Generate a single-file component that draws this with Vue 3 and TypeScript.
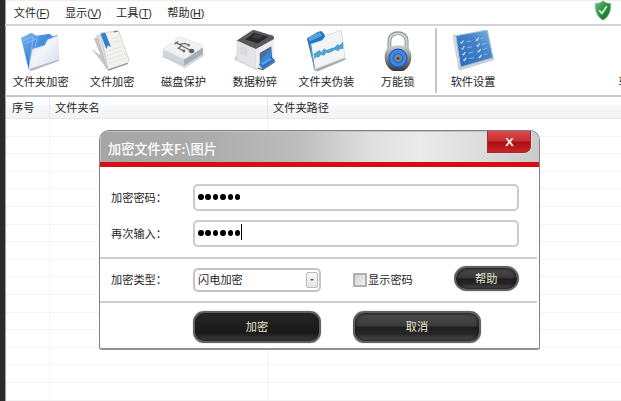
<script setup lang="ts">
import { ref } from 'vue'

interface Menu { label: string; key: string }
interface Tool { icon: string; label: string }

const menus: Menu[] = [
  { label: '文件', key: 'F' },
  { label: '显示', key: 'V' },
  { label: '工具', key: 'T' },
  { label: '帮助', key: 'H' },
]
const tools: Tool[] = [
  { icon: 'folder', label: '文件夹加密' },
  { icon: 'file', label: '文件加密' },
  { icon: 'disk', label: '磁盘保护' },
  { icon: 'shred', label: '数据粉碎' },
  { icon: 'disguise', label: '文件夹伪装' },
  { icon: 'lock', label: '万能锁' },
  { icon: 'settings', label: '软件设置' },
]
const rows = 16
const showPassword = ref(false)
const dots = 6
</script>

<template>
  <div class="app">
    <nav class="menubar">
      <span v-for="m in menus" :key="m.key" class="menu">{{ m.label }}<span class="key">(<u>{{ m.key }}</u>)</span></span>
      <svg class="shield" width="18" height="21" viewBox="0 0 18 21">
        <defs>
          <linearGradient id="sh" x1="0" y1="0" x2="1" y2="1">
            <stop offset="0" stop-color="#6fbf80" /><stop offset=".5" stop-color="#2b8f3f" /><stop offset="1" stop-color="#126c22" />
          </linearGradient>
        </defs>
        <path d="M9 .8C7 2.700 4 3.500 1.200 3.500C1 10 2.500 16.500 9 20.200C15.500 16.500 17 10 16.800 3.500C14 3.500 11 2.700 9 .8Z" fill="url(#sh)" stroke="#8dc297" stroke-width=".8" />
        <path d="M5.200 10.300L8 13.300L12.800 6.200" fill="none" stroke="#d9f0db" stroke-width="1.700" />
      </svg>
    </nav>

    <div class="toolbar">
      <template v-for="t in tools" :key="t.icon">
        <i v-if="t.icon === 'settings'" class="divider"></i>
        <div class="tool">
          <svg v-if="t.icon === 'folder'" width="44" height="44" viewBox="0 0 44 44">
            <defs>
              <linearGradient id="fb" x1="0" y1="0" x2="1" y2="1"><stop offset="0" stop-color="#7db9ef" /><stop offset=".6" stop-color="#2a7bd4" /><stop offset="1" stop-color="#1c6ac7" /></linearGradient>
              <linearGradient id="ff" x1="0" y1="0" x2="1" y2="1"><stop offset="0" stop-color="#d3e2f8" /><stop offset=".45" stop-color="#f3f5fb" /><stop offset="1" stop-color="#d4dae8" /></linearGradient>
            </defs>
            <path d="M9 41L37 31L42 32L12 43Z" fill="#b3b7be" />
            <path d="M1 8L12 3L17 6L31 4L38 10L30 30L9 41Z" fill="url(#fb)" />
            <path d="M3 11L14 7L10 34M6 14L18 9L12 32" fill="none" stroke="#9dcbf5" stroke-width=".7" />
            <path d="M9 41L13 20L26 16L29 10L39 6L41 31Z" fill="url(#ff)" stroke="#c3cfe3" stroke-width=".5" />
            <path d="M13 19L25 15.500L28.500 9.500L39 5.500" fill="none" stroke="#5a9fe2" stroke-width="1" />
          </svg>
          <svg v-else-if="t.icon === 'file'" width="44" height="44" viewBox="0 0 44 44">
            <path d="M0 19L17 41L12 28Z" fill="#c9c9c9" />
            <path d="M3 9L12 6L22 38L16 41Z" fill="#c4c4c4" />
            <path d="M6 6L14 4L24 39L17 41Z" fill="#dedede" stroke="#b5b5b5" stroke-width=".6" />
            <path d="M10 3L29 1L40 32L38 35L18 42Z" fill="#f2f1ef" stroke="#cac8c5" stroke-width=".8" />
            <path d="M15 23L33 17M16 27L34 21M17 31L36 25M18 35L37 29M22 9L29 7M24 13L31 11" stroke="#e2e1df" stroke-width=".8" />
            <path d="M18 42L38.500 35" stroke="#92918f" stroke-width="1.200" />
            <path d="M10 4L15 3L21 18L18 16L16 20Z" fill="#2d80d3" />
            <path d="M24 2L28 1" stroke="#777" stroke-width="1.200" />
          </svg>
          <svg v-else-if="t.icon === 'disk'" width="44" height="44" viewBox="0 0 44 44">
            <path d="M1 28L24 40L44 27L42 23L2 23Z" fill="#d5d8db" />
            <path d="M1 21L23 31L43 18L43 25L24 37L1 28Z" fill="#a3b0ba" />
            <path d="M1 21L23 31L23 36.500L1 27.500Z" fill="#cfd6dc" />
            <path d="M1 20L17 8Q19 7 21 7.500L42 16Q44 17 42 18.500L25 29.500Q23 31 20 29.500Z" fill="#f1f2f3" stroke="#dddfe1" stroke-width=".7" />
            <g fill="none" stroke="#66676a" stroke-width="1.300">
              <path d="M14 13L31 22M18 15L24 14L28 16M20 17L17 19L23 22M13 15L17 12" />
              <ellipse cx="31" cy="22" rx="2.200" ry="1.600" fill="#555" /><circle cx="23" cy="22" r=".8" /><circle cx="28" cy="16" r=".6" />
            </g>
          </svg>
          <svg v-else-if="t.icon === 'shred'" width="44" height="44" viewBox="0 0 44 44">
            <path d="M0 31L23 42L43 31L40 27L3 25Z" fill="#d0d0d0" />
            <path d="M3 11L23 19L23 41L3 31Z" fill="#e2e4e8" stroke="#d3d5da" stroke-width=".6" />
            <path d="M23 19L42 8L42 28L23 41Z" fill="#eeeef1" />
            <path d="M3 11L18 1Q20 -.5 23 .5L41 6Q43 8 41 10L23 20Z" fill="#57595b" />
            <path d="M12 10L21 3L36 7L25 14Z" fill="#252729" /><path d="M18 7L23 4L31 6.500L25 10Z" fill="#3b3d40" />
            <path d="M6 16L14 19L14 28L6 25Z" fill="#d6dade" />
            <path d="M27 24L39 17L40 29L27 36Z" fill="#4d6e93" />
            <path d="M27 33L38 20L40 31L29 38Z" fill="#3984dc" /><path d="M26 36L39 28L43 32L30 41Z" fill="#2a70c2" /><path d="M28 35L37 29L40 31L30 37Z" fill="#5a9fe8" />
            <path d="M25 40L30 41.500L43 33" fill="none" stroke="#3b5876" stroke-width="1.100" />
          </svg>
          <svg v-else-if="t.icon === 'disguise'" width="44" height="44" viewBox="0 0 44 44">
            <path d="M9 42L41 29L43 31L13 43.500Z" fill="#a5abb1" />
            <path d="M2 9L13 2L17 1L20 4L22 10L10 41Z" fill="#2278c0" />
            <path d="M3 8L15 2L18 6L5 12Z" fill="#55a2dd" />
            <path d="M10 41L6 15L18 11L22 6L38 0L42 29Z" fill="#f2f4f7" stroke="#ccd3dc" stroke-width=".8" />
            <path d="M9 25L12 23L15 21L17 23L20 19.500L23 21L27 19L31 18L34 15L36 16L40 12L40 20L37 20L35 22L31 21L28 23L25 24L22 24L20 27L17 26L14 29L12 28L10 31Z" fill="#4fa5cd" />
            <path d="M6 15L10 41" stroke="#4b8dc0" />
          </svg>
          <svg v-else-if="t.icon === 'lock'" width="44" height="44" viewBox="0 0 44 44">
            <defs><linearGradient id="lk" x1="0" x2="0" y1="0" y2="1"><stop offset="0" stop-color="#cfd0d1" /><stop offset=".5" stop-color="#85888b" /><stop offset="1" stop-color="#34373a" /></linearGradient></defs>
            <path d="M13 21V11.500C13 .5 31 .5 31 11.500V21" fill="none" stroke="#8a8d90" stroke-width="4" />
            <path d="M13 20V11.500C13 1 31 1 31 11.500V20" fill="none" stroke="#d1d4d6" stroke-width="2" />
            <path d="M8 28C8 20 13 16 22 16S36 20 36 28C36 35 32 41 27 43H17C12 41 8 35 8 28Z" fill="url(#lk)" />
            <circle cx="22" cy="29.500" r="10" fill="#2458ac" /><circle cx="22" cy="29.500" r="8.800" fill="#3b87ea" />
            <circle cx="22" cy="29.500" r="5.500" fill="#2b68b8" /><circle cx="22" cy="29.500" r="4" fill="#7a858f" /><circle cx="22" cy="29.500" r="1.600" fill="#3b4f63" />
          </svg>
          <svg v-else width="44" height="44" viewBox="0 0 44 44">
            <defs><linearGradient id="st" x1="0" x2="1" y1="1" y2="0"><stop offset="0" stop-color="#2f68b4" /><stop offset=".6" stop-color="#4383c8" /><stop offset="1" stop-color="#86b7e4" /></linearGradient></defs>
            <path d="M6 38L8 42L44 31L43 28Z" fill="#d0d2d4" stroke="#b0b3b6" stroke-width=".6" />
            <path d="M1 6L4 5L9 39L7 40Z" fill="#dcdeda" stroke="#b5b5b5" stroke-width=".5" />
            <path d="M4 6L37 0L43 29L9 39Z" fill="url(#st)" stroke="#a9c5e2" stroke-width="1" />
            <path d="M9 13L10 14L12 11M25 10L26 11L28 8M10 19L11 20L13 17M26 16L27 17L29 14M11 25L12 26L14 23M27 22L28 23L30 20M12 31L13 32L15 29M28 28L29 29L31 26" fill="none" stroke="#c9e1fa" stroke-width="1.200" />
            <path d="M15 12.500L20 11.500M30 9L34 8M16 18.500L21 17.500M31 15L36 14M17 24.500L22 23M32 20.500L37 19M18 30L23 29M33 26L37 25" fill="none" stroke="#86b6e6" stroke-width="1" />
          </svg>
          <span>{{ t.label }}</span>
        </div>
      </template>
      <span class="next-tool">软</span>
    </div>

    <div class="grid head"><b></b><span>序号</span><span>文件夹名</span><span>文件夹路径</span></div>
    <div class="rows">
      <div v-for="r in rows" :key="r" class="grid row"><b></b><span></span><span></span><span></span></div>
    </div>

    <section class="dialog">
      <header>
        <h1>加密文件夹F:\图片</h1>
        <button class="close">
          <svg width="11" height="10" viewBox="0 0 11 10"><path d="M1 .8H3.600L5.500 3.300L7.400.8H10L7 4.900L10.300 9.200H7.500L5.500 6.500L3.500 9.200H.7L4 4.900Z" fill="#f6eeee" stroke="#861212" stroke-width=".4" /></svg>
        </button>
      </header>
      <div class="fields">
        <label>加密密码：</label>
        <div class="input"><i v-for="d in dots" :key="d"></i></div>
        <label>再次输入：</label>
        <div class="input"><i v-for="d in dots" :key="d"></i><em></em></div>
      </div>
      <div class="options">
        <label>加密类型：</label>
        <div class="select">闪电加密<span class="arrow"></span></div>
        <div class="check" @click="showPassword = !showPassword"><i></i>显示密码</div>
        <button class="dark help">帮助</button>
      </div>
      <footer>
        <button class="dark ok">加密</button>
        <button class="dark cancel">取消</button>
      </footer>
    </section>
  </div>
</template>

<style>
body { margin: 0; overflow: hidden; }
</style>

<style scoped>
* { box-sizing: border-box; }
.app {
  position: relative;
  width: 621px;
  height: 401px;
  overflow: hidden;
  border-left: 5px solid #2b2b2b;
  background: #fff;
  box-shadow: inset 1px 0 #9a9fa3;
  font: 11.2px/16px "Liberation Sans", "Noto Sans CJK SC", sans-serif;
  color: #262626;
}
.menubar {
  display: flex;
  height: 24px;
  padding: 4px 0 0 8px;
  border-top: 1px solid #fbeaea;
  margin-left: 1px;
}
.menu { width: 51.500px; margin-left: -.3px; white-space: nowrap; }
.key { font-size: 10.800px; letter-spacing: -.2px; }
.shield { margin: -5px 9px 0 auto; }
.toolbar {
  display: flex;
  height: 73px;
  padding: 4px 0 0 0;
  margin-left: 0;
  border-top: 2px solid #d3d3d5;
  border-bottom: 2px solid #c3c5ca;
  overflow: hidden;
}
.tool {
  flex: none;
  display: flex;
  flex-direction: column;
  align-items: center;
  width: 71.400px;
  white-space: nowrap;
}
.tool svg { display: block; width: 42px; height: 42px; flex: none; }
.tool span { margin-top: 2px; }
.divider { flex: none; width: 2px; height: 65px; margin: -2px 0 0 2px; background: #c5c6c8; }
.next-tool { flex: none; margin: 44px 0 0 110px; white-space: nowrap; }
.grid { display: grid; grid-template-columns: 1px 43px 218px 1fr; }
.grid span { border-right: 1px solid #f3f3f3; padding-left: 5px; }
.grid span:last-child { border-right: 0; }
.head {
  height: 22px;
  line-height: 22px;
  border-bottom: 1px solid #e6e8eb;
  background: linear-gradient(#fff 0 35%, #f6f7f9 42%, #f1f3f5);
  margin-left: 1px;
}
.head span { border-color: #e4e6e9; }
.rows { margin-left: 1px; }
.row { height: 17.600px; border-bottom: 1px solid #f3f3f3; }

.dialog {
  position: absolute;
  left: 94px;
  top: 130px;
  width: 441px;
  height: 220px;
  border: 1px solid #808080;
  border-bottom: 2px solid #929292;
  border-radius: 10px 10px 3px 3px;
  background: #fff;
  overflow: hidden;
}
header {
  display: flex;
  justify-content: space-between;
  height: 36px;
  padding-right: 8px;
  border-bottom: 5px solid #d70c14;
  background: linear-gradient(90deg, #a6a6a6, #acacac 25%, #bdbdbd 45%, #dedede 61%, #ebebeb 73%, #dadada 88%, #cbcbcb);
  box-shadow: inset 1px 1px #c3c3c3;
}
h1 {
  margin: 9px 0 0 8px;
  font: 500 13.2px/18px "Noto Sans CJK SC", sans-serif;
  color: #fff;
  white-space: nowrap;
}
button { border: 0; padding: 0; font: inherit; }
.close {
  display: flex;
  align-items: center;
  justify-content: center;
  width: 44px;
  height: 22px;
  border: 1px solid #9c2a2f;
  border-top: 0;
  border-radius: 0 0 7px 0;
  background: linear-gradient(#d94a4d, #c82d30 48%, #a90b0f 52%, #cb2327);
  box-shadow: 0 0 0 1px #ddd;
}
.fields {
  display: grid;
  grid-template-columns: 82px 326px;
  row-gap: 9px;
  align-items: center;
  height: 92px;
  padding: 17px 0 13px 11px;
  margin-right: 2px;
  border-bottom: 2px solid #cecece;
  align-content: start;
}
label { white-space: nowrap; padding-top: 1px; }
.input {
  display: flex;
  height: 27px;
  padding: 7.500px 0 0 3px;
  gap: 1.900px;
  border: 2px solid #cbcbcb;
  border-radius: 5px;
}
.input i { width: 5.500px; height: 6px; border-radius: 50%; background: #000; }
.input em { width: 1px; height: 16px; margin: -6px 0 0 -1px; background: #000; }
.options {
  display: flex;
  align-items: center;
  height: 44px;
  padding: 0 0 0 11px;
  margin-right: 2px;
  border-bottom: 2px solid #cecece;
}
.options label { width: 82px; padding: 0; }
.select {
  display: flex;
  justify-content: space-between;
  align-items: center;
  width: 128px;
  height: 24px;
  padding: 0 1px 0 3px;
  border: 2px solid #c4c4c4;
  border-radius: 5px;
}
.arrow {
  display: flex;
  align-items: center;
  justify-content: center;
  width: 12px;
  height: 16px;
  border: 1px solid #bbb;
  border-radius: 2px;
  background: linear-gradient(#f8f8f8, #e4e4e4);
}
.arrow::after { content: ''; border: 2px solid transparent; border-top-color: #555; border-bottom: 0; }
.check { display: flex; align-items: center; gap: 1px; margin-left: 32px; white-space: nowrap; }
.check i { width: 14px; height: 14px; border: 2px solid #b0b0b0; background: linear-gradient(135deg, #d2d2d2, #f2f2f2); }
.dark {
  border: 2px solid #606060;
  background: linear-gradient(#4c4c4c, #3a3a3a 45%, #1d1d1d 52%, #262626 75%, #555);
  color: #e9e5cf;
  box-shadow: inset 0 0 3px 1px #1c1c1c, 0 0 1px #666;
}
.help { width: 65px; height: 25px; margin-left: 41px; margin-top: -3px; border-radius: 13px; }
footer { display: flex; gap: 32px; padding: 8px 0 0 93px; }
.ok, .cancel { width: 128px; height: 32px; border-radius: 11px; }
.ok { background: linear-gradient(#282828, #181818 70%, #414141); }
</style>
